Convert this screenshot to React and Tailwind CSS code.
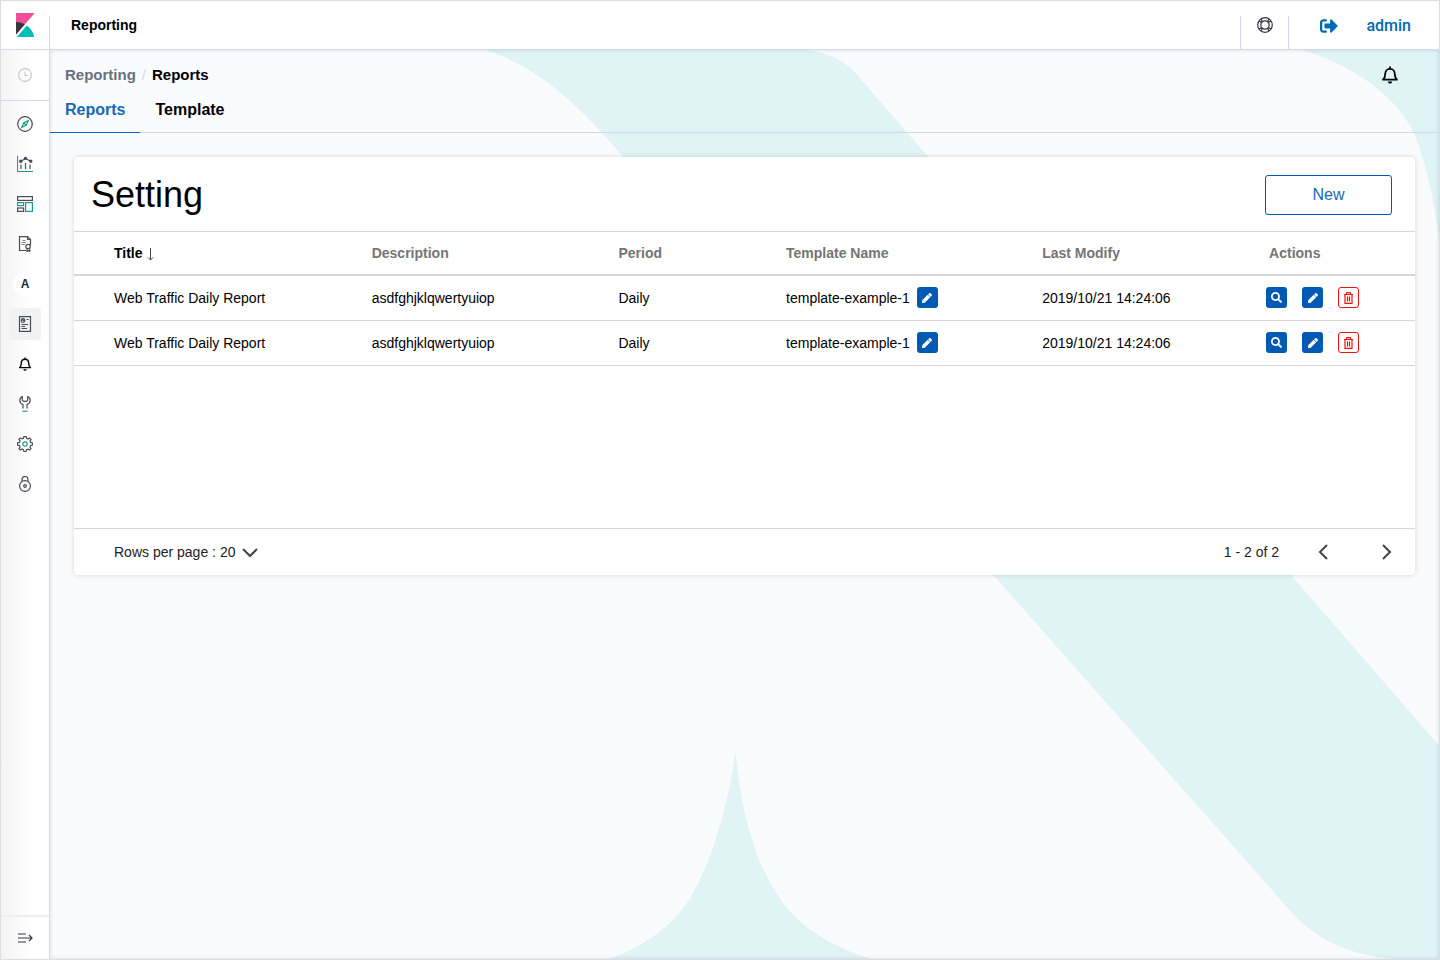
import React, { useState } from "react";
import { FaPen, FaSearch, FaSignOutAlt } from "react-icons/fa";

const TEAL = "#1a9c92";

const reports = [
  {
    id: 1,
    title: "Web Traffic Daily Report",
    description: "asdfghjklqwertyuiop",
    period: "Daily",
    template: "template-example-1",
    modified: "2019/10/21 14:24:06",
  },
  {
    id: 2,
    title: "Web Traffic Daily Report",
    description: "asdfghjklqwertyuiop",
    period: "Daily",
    template: "template-example-1",
    modified: "2019/10/21 14:24:06",
  },
];

function Icon({ children, className = "size-4" }) {
  return (
    <svg
      viewBox="0 0 16 16"
      fill="none"
      stroke="currentColor"
      strokeWidth="1.2"
      className={className}
      aria-hidden="true"
    >
      {children}
    </svg>
  );
}

function BellIcon({ className }) {
  return (
    <svg
      viewBox="0 0 18 18"
      fill="none"
      stroke="currentColor"
      strokeWidth="1.8"
      strokeLinejoin="round"
      className={className}
      aria-hidden="true"
    >
      <path d="M2 13.6C3.4 12.2 4.2 11.2 4.2 8.2C4.2 5 6.2 2.9 9 2.9C11.8 2.9 13.8 5 13.8 8.2C13.8 11.2 14.6 12.2 16 13.6Z" />
      <path d="M9 0.6V2.8" />
      <path d="M6.8 15.6H11.2A2.2 2.1 0 0 1 6.8 15.6Z" fill="currentColor" stroke="none" />
    </svg>
  );
}

function Logo() {
  return (
    <svg viewBox="0 0 32 32" className="size-6" aria-hidden="true">
      <path fill="#f04e98" d="M4 0v28.789L28.935.017z" />
      <path fill="#343741" d="M4 12v16.789l11.906-13.738A24.721 24.721 0 0 0 4 12" />
      <path
        fill="#00bfb3"
        d="M18.479 16.664L6.268 30.754l-1.073 1.237h23.191c-1.252-6.292-4.883-11.719-9.908-15.327"
      />
    </svg>
  );
}

const navItems = [
  {
    name: "Discover",
    icon: (
      <Icon>
        <circle cx="8" cy="8" r="7.3" />
        <path d="M11.2 4.8L9.2 9.2L4.8 11.2L6.8 6.8Z" stroke={TEAL} />
        <path d="M7 7L9 9" stroke={TEAL} />
      </Icon>
    ),
  },
  {
    name: "Visualize",
    icon: (
      <Icon>
        <path d="M0.5 0V15.5H16" stroke={TEAL} />
        <path d="M4 8.5V13M8.5 7V13M13 8.5V13" />
        <path d="M3.5 5.5L8.5 2.5L14 5.5" />
        <circle cx="3.8" cy="5.2" r="1.1" fill="currentColor" />
        <circle cx="8.5" cy="2.4" r="1.1" fill="currentColor" />
        <circle cx="13.8" cy="5.2" r="1.1" fill="currentColor" />
      </Icon>
    ),
  },
  {
    name: "Dashboard",
    icon: (
      <Icon>
        <rect x="0.6" y="0.6" width="14.8" height="3.8" />
        <rect x="0.6" y="6.6" width="6" height="3" stroke={TEAL} />
        <rect x="0.6" y="12" width="6" height="3.4" />
        <rect x="8.6" y="6.6" width="6.8" height="8.8" stroke={TEAL} />
      </Icon>
    ),
  },
  {
    name: "Audit",
    icon: (
      <Icon>
        <path d="M9 14.5H2.5V0.6H10.5L13.5 3.5V9" />
        <path d="M10.5 0.5V3.5H13.5" />
        <path d="M4.5 6.5H9M4.5 8.5H8M5.5 4.5H8.5" strokeOpacity="0.7" />
        <circle cx="11" cy="10.5" r="2.2" />
        <path d="M10 12.5V15.5L11.2 14.5L12.8 15.5V12.5" />
      </Icon>
    ),
  },
  {
    name: "Alerting",
    icon: (
      <span className="flex size-6 items-center justify-center rounded-full bg-white text-xs font-bold text-gray-800">
        A
      </span>
    ),
  },
  {
    name: "Reporting",
    active: true,
    icon: (
      <Icon>
        <rect x="2.5" y="0.6" width="11" height="14.8" />
        <circle cx="6" cy="4.5" r="1.8" />
        <path d="M6 2.7V4.5H7.8M9.5 3.5H11.5M4.5 8.5H11M4.5 10.5H8M4.5 12.5H10" />
      </Icon>
    ),
  },
  {
    name: "Notifications",
    icon: <BellIcon className="size-[14px] text-black" />,
  },
  {
    name: "Dev Tools",
    icon: (
      <Icon>
        <path d="M6 12.5V8.6C4.2 7.9 2.8 6.3 2.8 4.3C2.8 2.6 3.8 1.2 5.3 0.6V4.2L6.8 5.4H9.2L10.7 4.2V0.6C12.2 1.2 13.2 2.6 13.2 4.3C13.2 6.3 11.8 7.9 10 8.6V12.5" />
        <path d="M5.5 15.2H10.5" stroke={TEAL} />
      </Icon>
    ),
  },
  {
    name: "Management",
    icon: (
      <Icon>
        <path d="M6.8 0.6H9.2L9.7 2.5L11.1 3.1L12.8 2.1L14.1 3.5L13.1 5.1L13.6 6.4L15.5 6.9V9.1L13.6 9.6L13 11.1L14 12.7L12.6 14.1L11 13.1L9.6 13.6L9.1 15.5H6.9L6.4 13.6L5 13L3.4 14L2 12.6L3 11L2.4 9.6L0.5 9.1V6.9L2.4 6.4L3 4.9L2 3.3L3.4 2L5 2.9L6.4 2.4Z" />
        <circle cx="8" cy="8" r="2.2" stroke={TEAL} />
      </Icon>
    ),
  },
  {
    name: "Security",
    icon: (
      <Icon>
        <circle cx="8" cy="10" r="5.4" />
        <circle cx="8" cy="10" r="1.3" />
        <path d="M5 5.4V3.4A3 3 0 0 1 11 3.4V5.4" />
      </Icon>
    ),
  },
];

function Sidebar() {
  return (
    <aside className="flex w-[49px] shrink-0 flex-col border-r border-[#d9dde3] bg-linear-to-r from-[#f3f3f4] to-white to-60%">
      <button
        type="button"
        aria-label="Recently viewed"
        className="flex h-[51px] items-center justify-center border-b border-[#d3dae6] text-[#c4c6ca]"
      >
        <Icon className="size-[14px]">
          <circle cx="8" cy="8" r="7.3" />
          <path d="M8 4V8.5H11" />
        </Icon>
      </button>
      <nav className="flex flex-1 flex-col items-center pt-[3px]">
        {navItems.map((item) => (
          <a
            key={item.name}
            href="#"
            aria-label={item.name}
            className="flex h-10 items-center text-[#4a4d55]"
          >
            <span
              className={
                item.active
                  ? "flex size-8 items-center justify-center rounded bg-[#f1f2f4]"
                  : "flex size-8 items-center justify-center"
              }
            >
              {item.icon}
            </span>
          </a>
        ))}
      </nav>
      <button
        type="button"
        aria-label="Expand menu"
        className="flex h-11 items-center justify-center border-t-2 border-[#eeeff1] text-[#343741]"
      >
        <Icon>
          <path d="M1 4H9M1 8H15M1 12H9M12 5L15 8L12 11" />
        </Icon>
      </button>
    </aside>
  );
}

function Header() {
  return (
    <header className="flex h-[49px] items-stretch border-b border-[#d3dae6] bg-white">
      <a
        href="#"
        aria-label="Home"
        className="flex w-12 items-center justify-center"
      >
        <Logo />
      </a>
      <div className="mt-[15px] w-px bg-[#d3dae6]" />
      <h1 className="flex flex-1 items-center pl-[21px] text-sm font-bold">
        Reporting
      </h1>
      <div className="flex items-stretch">
        <button
          type="button"
          aria-label="Help"
          className="mt-[15px] flex w-12 items-start justify-center border-l border-[#d3dae6] pt-px text-[#343741]"
        >
          <Icon>
            <circle cx="8" cy="8" r="7.3" />
            <circle cx="8" cy="8" r="4.2" />
            <path d="M5.4 4.7L4 1.8M4.7 5.4L1.8 4M10.6 4.7L12 1.8M11.3 5.4L14.2 4M5.4 11.3L4 14.2M4.7 10.6L1.8 12M10.6 11.3L12 14.2M11.3 10.6L14.2 12" />
          </Icon>
        </button>
        <div className="mt-[15px] w-px bg-[#d3dae6]" />
        <div className="flex items-center gap-7 pt-[2px] pr-7 pl-[31px] text-[#006bb4]">
          <button type="button" aria-label="Log out">
            <FaSignOutAlt className="size-[18px]" />
          </button>
          <a href="#" className="font-[Roboto,sans-serif] text-base font-medium">
            admin
          </a>
        </div>
      </div>
    </header>
  );
}

function Backdrop() {
  return (
    <svg
      viewBox="0 0 1390 910"
      preserveAspectRatio="xMidYMin slice"
      className="absolute inset-0 size-full"
      fill="#e0f4f6"
      aria-hidden="true"
    >
      <path d="M436 0H755C782 2 798 12 813 31L1390 696V910H1354C1302 908 1266 890 1240 860L581 115C532 58 492 18 436 0Z" />
      <path d="M1254 0H1390V190C1386 155 1378 115 1365 83C1345 42 1300 15 1254 0Z" />
      <path d="M686 703C678 760 661 815 641 848C621 880 591 898 558 910H822C788 898 753 882 731 850C707 815 693 770 686 703Z" />
    </svg>
  );
}

function ActionButton({ label, danger, children }) {
  return (
    <button
      type="button"
      aria-label={label}
      className={
        danger
          ? "flex size-[21px] items-center justify-center rounded-[3px] border border-[#f01010] bg-white text-[#f01010]"
          : "flex size-[21px] items-center justify-center rounded-[3px] bg-[#005ab4] text-white"
      }
    >
      {children}
    </button>
  );
}

function ReportTable() {
  return (
    <table className="w-full table-fixed border-collapse text-left text-sm">
      <thead>
        <tr className="h-11 border-t border-b-2 border-[#d6d6d6] text-[#757575]">
          <th className="w-[22.2%] pl-10 text-black">
            <button type="button" className="flex items-center gap-1 font-bold">
              Title
              <svg
                viewBox="0 0 7 13"
                fill="none"
                stroke="#444"
                className="mt-1 h-[13px] w-[7px]"
                aria-hidden="true"
              >
                <path d="M3.5 0V12M1 9.5L3.5 12L6 9.5" />
              </svg>
            </button>
          </th>
          <th className="w-[18.4%]">Description</th>
          <th className="w-[12.5%]">Period</th>
          <th className="w-[19.1%]">Template Name</th>
          <th className="w-[16.7%]">Last Modify</th>
          <th className="pl-[3px]">Actions</th>
        </tr>
      </thead>
      <tbody>
        {reports.map((report) => (
          <tr key={report.id} className="h-[45px] border-b border-[#d6d6d6]">
            <td className="pl-10">{report.title}</td>
            <td>{report.description}</td>
            <td>{report.period}</td>
            <td>
              <div className="flex items-center gap-[7px]">
                {report.template}
                <ActionButton label="Edit template">
                  <FaPen className="size-[10px]" />
                </ActionButton>
              </div>
            </td>
            <td>{report.modified}</td>
            <td>
              <div className="flex items-center gap-[15px]">
                <ActionButton label="View report">
                  <FaSearch className="size-[11px]" />
                </ActionButton>
                <ActionButton label="Edit report">
                  <FaPen className="size-[10px]" />
                </ActionButton>
                <ActionButton label="Delete report" danger>
                  <svg
                    viewBox="0 0 11 12"
                    fill="none"
                    stroke="currentColor"
                    className="h-3 w-[11px]"
                    aria-hidden="true"
                  >
                    <path
                      strokeWidth="1.2"
                      d="M1 2.5H10M3.5 2.5V1.2Q3.5 0.6 4.2 0.6H6.8Q7.5 0.6 7.5 1.2V2.5M2 2.5V11.4H9V2.5M4.5 4.5V9.5M6.5 4.5V9.5"
                    />
                  </svg>
                </ActionButton>
              </div>
            </td>
          </tr>
        ))}
      </tbody>
    </table>
  );
}

function Pagination() {
  const [rows, setRows] = useState("20");

  return (
    <div className="flex h-[47px] items-center justify-between border-t border-[#d6d6d6] pr-5 pl-10 text-sm text-[#222]">
      <div className="flex items-center gap-1">
        <label htmlFor="rows">Rows per page :</label>
        <div className="relative flex items-center">
          <select
            id="rows"
            value={rows}
            onChange={(e) => setRows(e.target.value)}
            className="w-[38px] appearance-none bg-transparent"
          >
            <option>20</option>
            <option>50</option>
          </select>
          <Icon className="pointer-events-none absolute right-0 size-4 text-[#444]">
            <path d="M1 5L8 12L15 5" strokeWidth="2" />
          </Icon>
        </div>
      </div>
      <div className="flex items-center text-[#444]">
        <span className="mr-9 text-[#222]">1 - 2 of 2</span>
        <button type="button" aria-label="Previous page" className="mr-12">
          <Icon>
            <path d="M12 1L5 8L12 15" strokeWidth="2" />
          </Icon>
        </button>
        <button type="button" aria-label="Next page">
          <Icon>
            <path d="M4 1L11 8L4 15" strokeWidth="2" />
          </Icon>
        </button>
      </div>
    </div>
  );
}

export default function App() {
  return (
    <div className="flex min-h-screen flex-col border border-[#dcdde0] bg-white font-['Liberation_Sans',Arial,sans-serif] text-black">
      <Header />
      <div className="flex flex-1">
        <Sidebar />
        <main className="relative min-w-0 flex-1 bg-[#fafbfd]">
          <Backdrop />
          <div className="relative h-full shadow-[inset_0_0_4px_rgba(60,80,100,0.2)]">
            {/* Breadcrumb and tabs */}
            <div className="border-b border-[#cfdbe2]">
              <div className="flex items-center justify-between pt-[14px] pr-10 pl-[15px]">
                <nav className="flex items-center gap-[6px] text-[15px] font-bold">
                  <a href="#" className="text-[#69707d]">
                    Reporting
                  </a>
                  <span className="font-normal text-[#d3dae6]">/</span>
                  <span>Reports</span>
                </nav>
                <button type="button" aria-label="Notifications">
                  <BellIcon className="size-[18px]" />
                </button>
              </div>
              <div className="-mb-px flex text-base font-bold">
                <a
                  href="#"
                  className="flex h-[46px] items-center border-b border-[#0a62ba] px-[15px] pt-[2px] text-[#1769b5]"
                >
                  Reports
                </a>
                <a
                  href="#"
                  className="flex h-[46px] items-center border-b border-transparent px-[15px] pt-[2px]"
                >
                  Template
                </a>
              </div>
            </div>

            {/* Report list */}
            <section className="m-6 rounded bg-white shadow-[0_0_5px_rgba(0,0,0,0.16)]">
              <div className="flex h-[74px] items-center justify-between pt-[2px] pr-[23px] pl-[17px]">
                <h2 className="text-4xl">Setting</h2>
                <button
                  type="button"
                  className="h-10 w-[127px] rounded-[3px] border border-[#005ab4] bg-white text-base text-[#1769b5]"
                >
                  New
                </button>
              </div>
              <div className="min-h-[297px]">
                <ReportTable />
              </div>
              <Pagination />
            </section>
          </div>
        </main>
      </div>
    </div>
  );
}
